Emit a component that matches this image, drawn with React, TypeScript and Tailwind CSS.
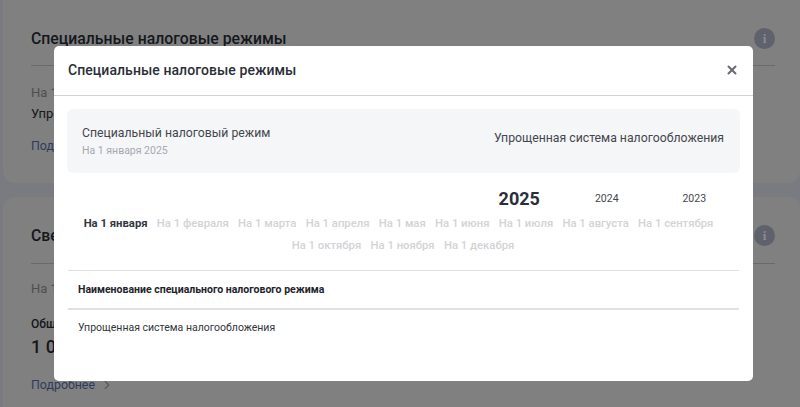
import { X, ChevronRight } from 'lucide-react'

const font = "font-['Roboto','Liberation_Sans',sans-serif]"

const monthsTop = [
  'На 1 января',
  'На 1 февраля',
  'На 1 марта',
  'На 1 апреля',
  'На 1 мая',
  'На 1 июня',
  'На 1 июля',
  'На 1 августа',
  'На 1 сентября',
]
const monthsBottom = ['На 1 октября', 'На 1 ноября', 'На 1 декабря']

function InfoBadge() {
  return (
    <span className="flex h-[21px] w-[21px] shrink-0 items-center justify-center rounded-full bg-[#5f626c] font-['Liberation_Serif',serif] text-[13px] font-bold text-[#8a8c92]">
      i
    </span>
  )
}

function MoreLink() {
  return (
    <div className="flex items-center gap-[5px] text-[12.4px] text-[#2f3b5c]">
      Подробнее
      <ChevronRight size={14} className="text-[#55585f]" />
    </div>
  )
}

function MonthTab({ label, active }: { label: string; active?: boolean }) {
  return (
    <span
      className={`text-[11.3px] leading-[22px] ${active ? 'font-bold text-[#33363f]' : 'font-medium text-[#d2d3d6]'}`}
    >
      {label}
    </span>
  )
}

export default function App() {
  return (
    <div className={`relative h-[407px] w-[800px] overflow-hidden bg-[#7a7b80] ${font}`}>
      {/* page behind the dialog */}
      <div className="flex flex-col gap-[14px] pl-[3px]">
        <section className="-mt-[11px] h-[194px] rounded-xl bg-[#808080] pl-7 pr-[25px] pt-[38px]">
          <div className="flex items-center justify-between border-b border-[#6a6a6a] pb-[14px]">
            <h2 className="text-[15.8px] font-medium text-[#15171c]">Специальные налоговые режимы</h2>
            <InfoBadge />
          </div>
          <p className="mt-[17px] text-[13px] text-[#4f4f4f]">На 1 января 2025</p>
          <p className="mt-[2px] text-[13px] text-[#15171c]">Упрощенная система</p>
          <div className="mt-[13px]">
            <MoreLink />
          </div>
        </section>
        <section className="h-[220px] rounded-xl bg-[#808080] pl-7 pr-[25px] pt-[27px]">
          <div className="flex items-center justify-between border-b border-[#6a6a6a] pb-[15px]">
            <h2 className="text-[15.8px] font-medium text-[#15171c]">Сведения</h2>
            <InfoBadge />
          </div>
          <p className="mt-[15px] text-[13px] text-[#4f4f4f]">На 1 января 2025</p>
          <p className="mt-[18px] text-xs font-medium text-[#15171c]">Общая сумма</p>
          <p className="mt-[1px] text-lg font-medium text-[#15171c]">1 000</p>
          <div className="mt-[15px]">
            <MoreLink />
          </div>
        </section>
      </div>

      {/* dialog */}
      <div className="absolute left-[54px] top-[46px] h-[335px] w-[699px] rounded-[5px] bg-white">
        <div className="flex h-[50px] items-center justify-between border-b border-[#d0d0d4] px-[14px] pb-[1px]">
          <h3 className="text-sm font-medium tracking-[0.07px] text-[#2b2e38]">Специальные налоговые режимы</h3>
          <X size={14} strokeWidth={3.5} className="text-[#6b6d75]" />
        </div>
        <div className="px-[14px]">
          <div className="-mx-[1px] mt-[13px] flex h-[64px] items-center justify-between rounded-md bg-[#f5f6f8] pl-[15px] pr-[16px]">
            <div>
              <p className="text-[12.25px] leading-[18px] text-[#44464e]">Специальный налоговый режим</p>
              <p className="mt-[1px] text-[10.5px] leading-[15px] text-[#a5a8b0]">На 1 января 2025</p>
            </div>
            <p className="mb-[6px] text-[12.25px] text-[#44464e]">Упрощенная система налогообложения</p>
          </div>

          <div className="mt-[15px] flex h-[22px] items-center justify-end pr-[1px]">
            <span className="w-[87.5px] text-center text-lg font-bold text-[#2b2e38]">2025</span>
            <span className="w-[87.5px] text-center text-[10.5px] text-[#44464e]">2024</span>
            <span className="w-[87.5px] text-center text-[10.5px] text-[#44464e]">2023</span>
          </div>

          <div className="mt-[3px] flex justify-center gap-x-[9.25px] pr-[10px]">
            {monthsTop.map((m, i) => (
              <MonthTab key={m} label={m} active={i === 0} />
            ))}
          </div>
          <div className="flex justify-center gap-x-[9.25px] pr-[1px]">
            {monthsBottom.map((m) => (
              <MonthTab key={m} label={m} />
            ))}
          </div>

          <div className="mt-[13px] flex h-[38px] items-center border-t border-[#e0e0e2] pl-[10px] text-[10.5px] font-bold text-[#22242b]">
            Наименование специального налогового режима
          </div>
          <div className="flex h-[38px] items-center border-t-2 border-[#e0e0e2] pl-[10px] text-[10.5px] text-[#33353c]">
            Упрощенная система налогообложения
          </div>
        </div>
      </div>
    </div>
  )
}
